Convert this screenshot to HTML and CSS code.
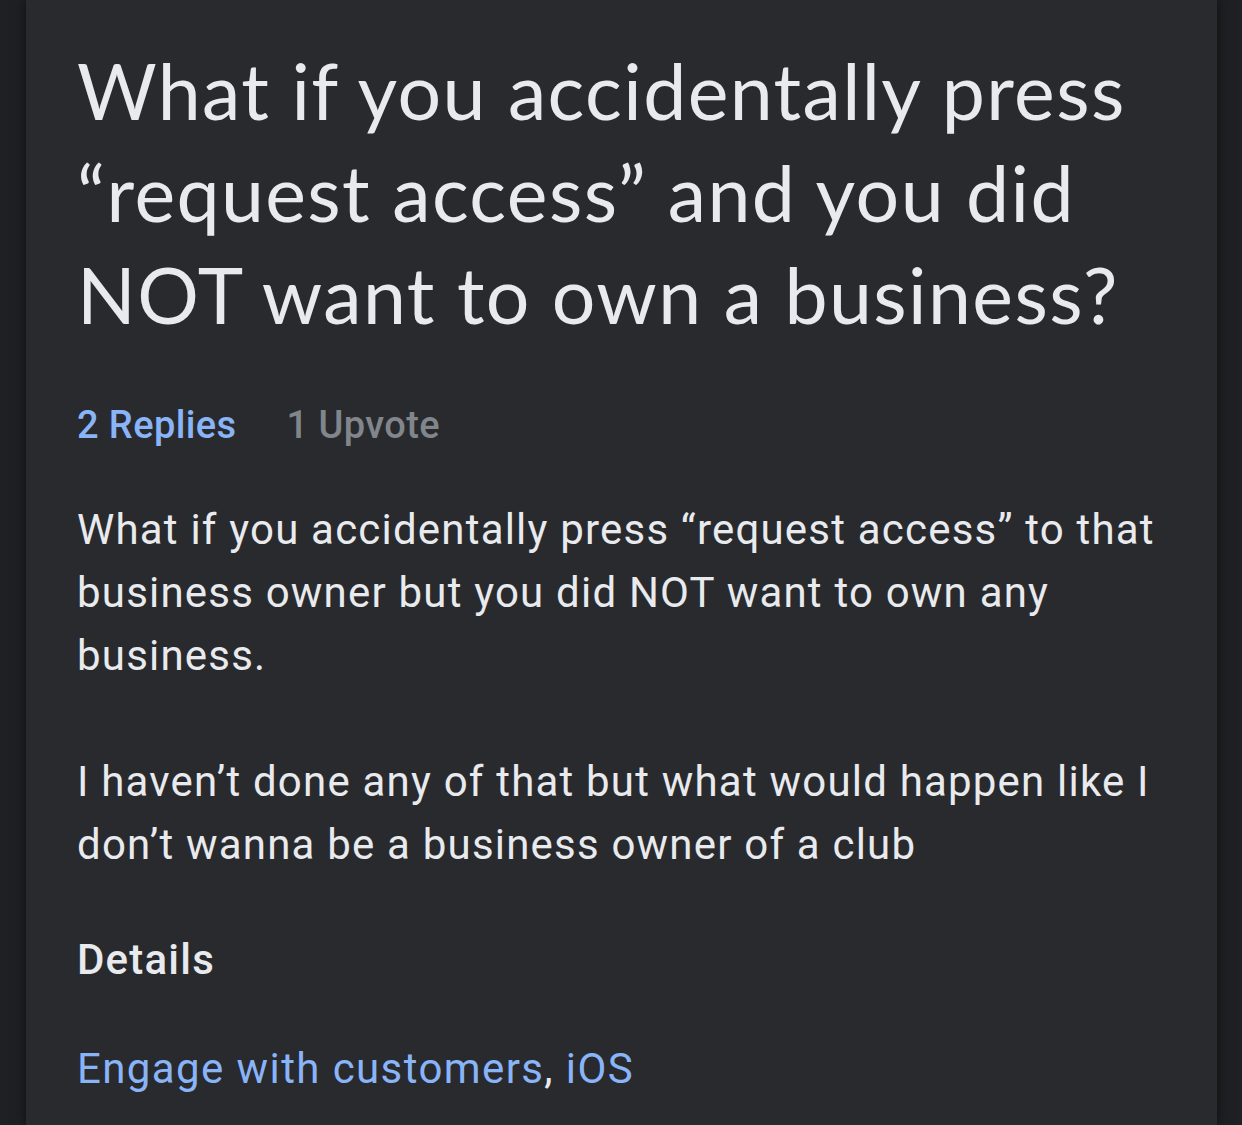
FILE: index.html
```html
<!DOCTYPE html>
<html lang="en">
<head>
  <meta charset="UTF-8">
  <meta name="viewport" content="width=device-width, initial-scale=1.0">
  <title>Question</title>
  <link rel="stylesheet" href="styles.css">
</head>
<body>
  <div class="card">
    <h1 class="question-title">What if you accidentally press “request access” and you did NOT want to own a business?</h1>

    <!-- Counts -->
    <div class="meta">
      <span class="replies">2 Replies</span>
      <span class="upvotes">1 Upvote</span>
    </div>

    <div class="question-body">
      <p>What if you accidentally press “request access” to that business owner but you did NOT want to own any business.</p>
      <p>I haven’t done any of that but what would happen like I don’t wanna be a business owner of a club</p>
    </div>

    <h2 class="details-title">Details</h2>
    <div class="tags"><a href="#">Engage with customers</a>, <a href="#">iOS</a></div>
  </div>
</body>
</html>
```

FILE: styles.css
```css
body {
  margin: 0;
  background-color: #1f2023;
  font-family: Roboto, "Liberation Sans", sans-serif;
  color: #e8eaed;
}
.card {
  margin: 0 25px 0 26px;
  min-height: 1125px;
  box-sizing: border-box;
  padding: 39px 40px 0 51px;
  background-color: #292a2e;
  box-shadow: 0 0 12px rgba(0, 0, 0, 0.6);
}
.question-title {
  margin: 0;
  font-family: Lato, "Open Sans", sans-serif;
  font-weight: 400;
  font-size: 77px;
  line-height: 102px;
  letter-spacing: 1.4px;
  color: #e8eaed;
}
.meta {
  margin-top: 58px;
  display: flex;
  gap: 50px;
  font-size: 38px;
  font-weight: 500;
  line-height: 1.2;
  letter-spacing: 0.4px;
}
.replies {
  color: #8ab4f8;
}
.upvotes {
  color: #80868b;
}
.question-body {
  margin-top: 49px;
  font-size: 42px;
  line-height: 63px;
  letter-spacing: 1.2px;
}
.question-body p {
  margin: 0 0 63px 0;
}
.question-body p:last-child {
  margin-bottom: 0;
}
.details-title {
  margin: 52px 0 0 0;
  font-size: 42px;
  font-weight: 500;
  line-height: 63px;
  letter-spacing: 1.2px;
}
.tags {
  margin-top: 46px;
  font-size: 42px;
  line-height: 63px;
  letter-spacing: 1.4px;
}
.tags a {
  color: #8ab4f8;
  text-decoration: none;
}
```
